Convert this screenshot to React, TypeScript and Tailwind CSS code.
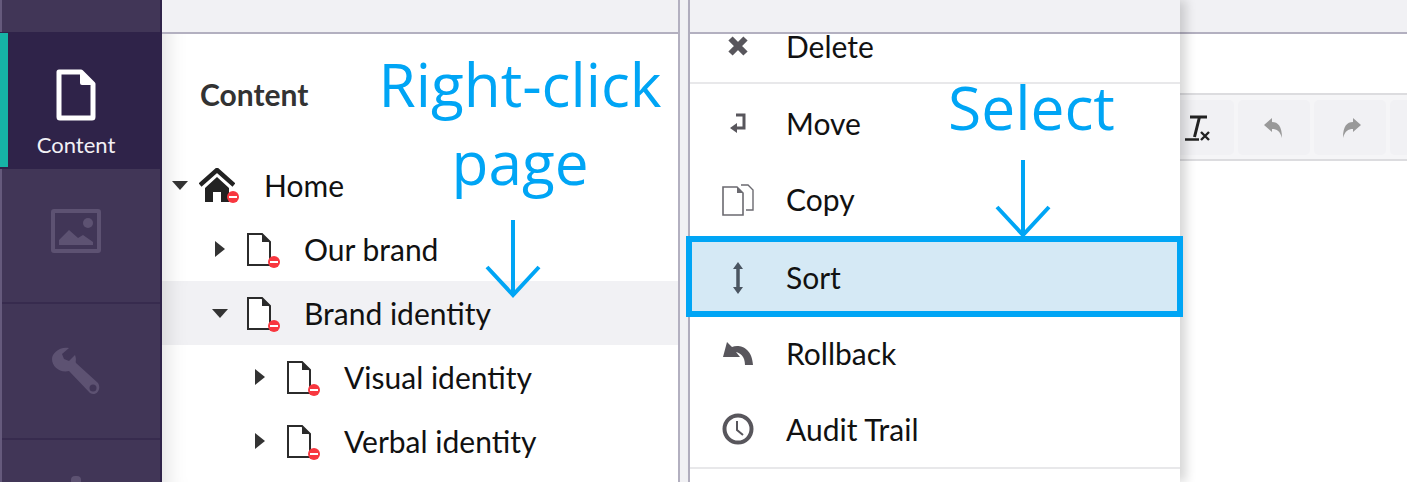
const FileIcon = () => (
  <svg width="40" height="52" viewBox="0 0 40 52" className="shrink-0">
    <path d="M3 3 H25 L37 15 V48 Q37 49 36 49 H4 Q3 49 3 48 Z" fill="none" stroke="#fff" strokeWidth="5" strokeLinejoin="round" />
    <path d="M24 4 L36 16 H26 Q24 16 24 14 Z" fill="#fff" />
  </svg>
)

const ImageIcon = () => (
  <svg width="50" height="44" viewBox="0 0 50 44">
    <rect x="2" y="2" width="46" height="40" rx="1" fill="none" stroke="#5d5272" strokeWidth="4" />
    <circle cx="37" cy="14" r="5" fill="#5d5272" />
    <path d="M8 36 V31 L18 21 L27 29 L32 26 L42 33 V36 Z" fill="#5d5272" />
  </svg>
)

const WrenchIcon = () => (
  <svg width="48" height="48" viewBox="0 0 48 48">
    <path d="M17 1 L10 7 L12 12 L17 14 L23 8 C25 14 23 14 24 16 L46 36 C50 42 44 50 38 46 L17 24 C8 26 0 20 0 12 C0 6 8 -1 17 1 Z" fill="#5d5272" />
    <circle cx="41" cy="41" r="3.5" fill="#413657" />
  </svg>
)

const HomeIcon = () => (
  <div className="relative w-[36px] h-[34px]">
    <svg width="36" height="34" viewBox="0 0 36 34">
      <path d="M1 17 L18 2 L35 17" fill="none" stroke="#222" strokeWidth="4.5" />
      <path d="M6 20 L18 9 L30 20 V34 H22 V24 H14 V34 H6 Z" fill="#222" />
    </svg>
    <NoBadge className="right-[-4px] bottom-[-1px]" />
  </div>
)

const NoBadge = ({ className }: { className: string }) => (
  <span className={`absolute w-[12px] h-[12px] rounded-full bg-[#f8373f] flex items-center justify-center ${className}`}>
    <span className="w-[8px] h-[2px] bg-white" />
  </span>
)

const PageIcon = () => (
  <div className="relative w-[24px] h-[33px]">
    <svg width="24" height="33" viewBox="0 0 24 33">
      <path d="M1 1 H15 L23 9 V32 H1 Z" fill="#fff" stroke="#2b2b2b" strokeWidth="2" />
      <path d="M15 1 L23 9 H15 Z" fill="#2b2b2b" />
    </svg>
    <NoBadge className="right-[-9px] bottom-[-2px]" />
  </div>
)

const Caret = ({ open }: { open?: boolean }) =>
  open ? (
    <span className="w-0 h-0 border-x-[8px] border-x-transparent border-t-[9px] border-t-[#333]" />
  ) : (
    <span className="w-0 h-0 border-y-[8px] border-y-transparent border-l-[10px] border-l-[#333]" />
  )

const treeRows = [
  { label: "Our brand", indent: "pl-[52px]" },
  { label: "Brand identity", indent: "pl-[52px]", open: true, active: true },
  { label: "Visual identity", indent: "pl-[92px]" },
  { label: "Verbal identity", indent: "pl-[92px]" },
]

const DeleteIcon = () => (
  <svg width="22" height="22" viewBox="0 0 22 22">
    <path d="M3.5 3.5 L18.5 18.5 M18.5 3.5 L3.5 18.5" stroke="#58565c" strokeWidth="6" />
  </svg>
)
const MoveIcon = () => (
  <svg width="16" height="20" viewBox="0 0 16 20">
    <path d="M6 2 H14 V15 H6" fill="none" stroke="#58565c" strokeWidth="3" />
    <path d="M7 10 V20 L0 15 Z" fill="#58565c" />
  </svg>
)
const CopyIcon = () => (
  <svg width="32" height="32" viewBox="0 0 32 32">
    <path d="M19 1 H26 L31 6 V26 H24" fill="none" stroke="#6b6a70" strokeWidth="1.4" />
    <path d="M1 3 H15 L21 9 V31 H1 Z" fill="#fff" stroke="#6b6a70" strokeWidth="1.6" />
    <path d="M15 3 L21 9 H15 Z" fill="#6b6a70" />
  </svg>
)
const SortIcon = () => (
  <svg width="10" height="32" viewBox="0 0 10 32">
    <path d="M5 3 V29" stroke="#4a5561" strokeWidth="3.5" />
    <path d="M0 7 L5 0 L10 7 Z M0 25 L5 32 L10 25 Z" fill="#4a5561" />
  </svg>
)
const RollbackIcon = () => (
  <svg width="30" height="23" viewBox="0 0 30 23">
    <path d="M0 15 L4 0 L9 5 C16 2 29 5 30 23 H22 C22 14 17 11 13 10 L17 15 Z" fill="#58565c" />
  </svg>
)
const ClockIcon = () => (
  <svg width="32" height="32" viewBox="0 0 32 32">
    <circle cx="16" cy="16" r="13.5" fill="none" stroke="#58565c" strokeWidth="4" />
    <path d="M15 8 V17 L21 22" fill="none" stroke="#58565c" strokeWidth="2" />
  </svg>
)
const ClearFormatIcon = () => (
  <svg width="26" height="26" viewBox="0 0 26 26">
    <path d="M5 2 H22 M14.5 2 L9.5 22" fill="none" stroke="#222" strokeWidth="3" />
    <path d="M0 24.5 H14" stroke="#222" strokeWidth="2.5" />
    <path d="M16 17 L24 25 M24 17 L16 25" stroke="#222" strokeWidth="2.4" />
  </svg>
)

const MenuRow = ({ icon, label, className }: { icon: React.ReactNode; label: string; className?: string }) => (
  <div className={`flex items-center ${className ?? ""}`}>
    <div className="w-[96px] flex justify-center">{icon}</div>
    <span>{label}</span>
  </div>
)

export default function App() {
  return (
    <div className="relative flex w-[1407px] h-[482px] overflow-hidden bg-white font-['Lato'] text-[30px] text-[#111]">
      {/* sidebar */}
      <aside className="w-[162px] shrink-0 flex flex-col bg-[#413657] border-l-2 border-l-[#655a7c] border-r-2 border-r-[#2f2349]">
        <div className="h-[32px] shrink-0" />
        <div className="relative -ml-[2px] h-[137px] shrink-0 bg-[#2f2349] flex flex-col items-center pt-[37px] pr-[8px] text-white">
          <span className="absolute left-0 top-[1px] bottom-[2px] w-[8px] bg-[#16b4a6]" />
          <FileIcon />
          <span className="mt-[10px] text-[22px] leading-[27px] text-[#f2f0f5]">Content</span>
        </div>
        <div className="h-[135px] shrink-0 flex items-center justify-center border-b-2 border-b-[#372b4e] pb-[10px] pr-[10px]">
          <ImageIcon />
        </div>
        <div className="h-[136px] shrink-0 flex items-center justify-center border-b-2 border-b-[#372b4e] pr-[10px]">
          <WrenchIcon />
        </div>
        <div className="flex justify-center pt-[36px] pr-[10px]">
          <span className="w-[10px] h-[6px] rounded-t bg-[#5d5272]" />
        </div>
      </aside>

      {/* tree */}
      <section className="w-[516px] shrink-0 flex flex-col shadow-[inset_26px_0_22px_-22px_rgba(0,0,0,0.13)]">
        <div className="h-[34px] shrink-0 bg-[#f1f1f4] border-b-2 border-b-[#b3b0c0]" />
        <h2 className="mt-[41px] pl-[38px] h-[38px] leading-[38px] text-[30px] font-bold text-[#333]">Content</h2>
        <div className="mt-[40px] h-[64px] shrink-0 flex items-center pl-[10px]">
          <Caret open />
          <span className="ml-[11px]"><HomeIcon /></span>
          <span className="ml-[29px]">Home</span>
        </div>
        {treeRows.map((r) => (
          <div key={r.label} className={`h-[64px] shrink-0 flex items-center ${r.indent} ${r.active ? "bg-[#f1f1f4] shadow-[inset_26px_0_22px_-22px_rgba(0,0,0,0.13)]" : ""}`}>
            <span className="w-[16px] flex justify-center -ml-[2px]"><Caret open={r.open} /></span>
            <span className="ml-[19px]"><PageIcon /></span>
            <span className="ml-[33px]">{r.label}</span>
          </div>
        ))}
      </section>

      {/* splitter */}
      <div className="w-[12px] shrink-0 flex flex-col border-l-2 border-l-[#b3b0c0] border-r-2 border-r-[#b3b0c0] bg-[#f1f1f4]" />

      {/* context menu */}
      <section className="w-[490px] shrink-0 flex flex-col relative z-10 bg-white shadow-[6px_0_10px_rgba(0,0,0,0.16)]">
        <div className="h-[34px] shrink-0 bg-[#f1f1f4] border-b-2 border-b-[#b3b0c0]" />
        <MenuRow icon={<DeleteIcon />} label="Delete" className="h-[24px] mt-0" />
        <div className="h-[2px] mt-[24px] bg-[#e8e8ea]" />
        <MenuRow icon={<MoveIcon />} label="Move" className="h-[78px]" />
        <MenuRow icon={<CopyIcon />} label="Copy" className="h-[75px]" />
        <MenuRow icon={<SortIcon />} label="Sort" className="h-[79px] pt-[2px] bg-[#d5e9f5]" />
        <MenuRow icon={<RollbackIcon />} label="Rollback" className="h-[75px]" />
        <MenuRow icon={<ClockIcon />} label="Audit Trail" className="h-[76px]" />
        <div className="h-[2px] bg-[#e8e8ea]" />
      </section>

      {/* editor */}
      <section className="flex-1 min-w-0 flex flex-col">
        <div className="h-[34px] shrink-0 bg-[#f1f1f4] border-b-2 border-b-[#b3b0c0]" />
        <div className="mt-[59px] h-[68px] flex items-center gap-[4px] bg-[#f5f5f7] border-y-2 border-y-[#dcdcdf] -ml-[47px] pt-[1px]">
          <div className="w-[101px] h-[55px] shrink-0 rounded-[5px] bg-[#f1f1f4] flex items-center justify-end pr-[23px]">
            <ClearFormatIcon />
          </div>
          <div className="w-[72px] h-[55px] shrink-0 rounded-[5px] bg-[#f1f1f4] flex items-center justify-center pr-[3px]">
            <svg width="18" height="20" viewBox="0 0 18 20"><path d="M0 7 L8 0 V4 C14 4 18 8 18 20 C16 13 13 11 8 11 V14 Z" fill="#999" /></svg>
          </div>
          <div className="w-[72px] h-[55px] shrink-0 rounded-[5px] bg-[#f1f1f4] flex items-center justify-center pl-[3px]">
            <svg width="18" height="20" viewBox="0 0 18 20"><path d="M18 7 L10 0 V4 C4 4 0 8 0 20 C2 13 5 11 10 11 V14 Z" fill="#999" /></svg>
          </div>
          <div className="w-[72px] h-[55px] shrink-0 rounded-[5px] bg-[#f1f1f4]" />
        </div>
      </section>

      {/* annotation overlays */}
      <div className="absolute left-[340px] top-[45px] w-[360px] z-20 text-center font-['Open_Sans'] text-[60.3px] leading-[78px] text-[#00a5f5]">
        Right-click<br />page
      </div>
      <div className="absolute left-[948px] top-[67px] z-20 font-['Open_Sans'] text-[60.5px] leading-[80px] text-[#00a5f5]">Select</div>
      <div className="absolute left-[686px] top-[236px] w-[497px] h-[81px] border-[6px] border-[#00a5f5] z-20" />
      <svg className="absolute left-[484px] top-[220px] z-20" width="58" height="78" viewBox="0 0 58 78">
        <path d="M29 0 V75 M3 47 L29 75 L55 47" fill="none" stroke="#00a5f5" strokeWidth="4" />
      </svg>
      <svg className="absolute left-[994px] top-[160px] z-20" width="58" height="78" viewBox="0 0 58 78">
        <path d="M29 0 V75 M3 47 L29 75 L55 47" fill="none" stroke="#00a5f5" strokeWidth="4" />
      </svg>
    </div>
  )
}
